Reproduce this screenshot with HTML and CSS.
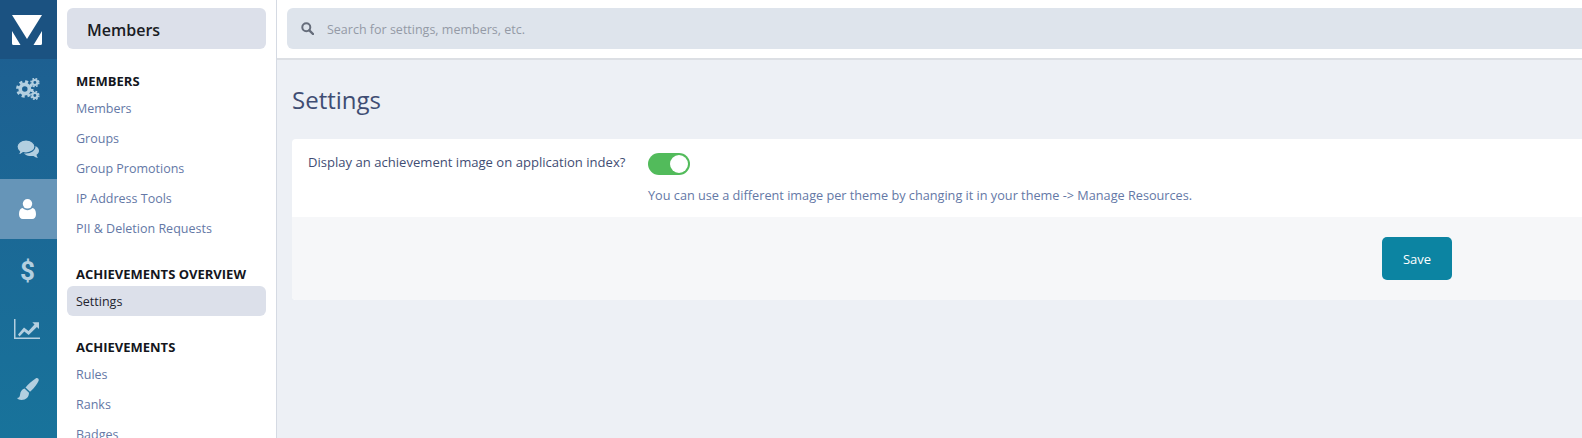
FILE: index.html
```html
<!DOCTYPE html>
<html lang="en">
<head>
<meta charset="utf-8">
<title>Settings</title>
<link rel="stylesheet" href="styles.css">
</head>
<body>
<div class="app">
  <nav class="rail">
    <div class="rail-logo">
      <svg class="logo" viewBox="0 0 30 30" width="30" height="30"><path d="M0 0H30L15 24Z" fill="#fff"/><path d="M0 16L8.500 30H1.500Q0 30 0 28.500ZM30 16L21.500 30H28.500Q30 30 30 28.500Z" fill="#fff"/></svg>
    </div>
    <a class="rail-item">
      <svg viewBox="0 0 26 24" width="24" height="22" class="ico"><circle cx="9.500" cy="12" r="5" fill="none" stroke="currentColor" stroke-width="4"/><circle cx="9.500" cy="12" r="8" fill="none" stroke="currentColor" stroke-width="3" stroke-dasharray="3.300 3"/><circle cx="20.500" cy="5" r="2.700" fill="none" stroke="currentColor" stroke-width="2.200"/><circle cx="20.500" cy="5" r="4.300" fill="none" stroke="currentColor" stroke-width="1.700" stroke-dasharray="1.900 1.500"/><circle cx="20.500" cy="19" r="2.700" fill="none" stroke="currentColor" stroke-width="2.200"/><circle cx="20.500" cy="19" r="4.300" fill="none" stroke="currentColor" stroke-width="1.700" stroke-dasharray="1.900 1.500"/></svg>
    </a>
    <a class="rail-item">
      <svg viewBox="0 0 22 18" width="22" height="18" class="ico"><path d="M14 5C18.500 5 22 7.500 22 10.700c0 1.700-1 3.100-2.500 4.100.2.900.7 1.800 1.300 3.200-1.700-.4-3.200-1.100-4.300-2.100-.8.200-1.600.2-2.500.2-4.400 0-8-2.500-8-5.400S9.600 5 14 5z" fill="currentColor"/><path class="chat-front" d="M9 0c5 0 9 2.900 9 6.500S14 13 9 13c-1 0-2-.1-2.900-.4C4.800 13.800 3.100 14.700 1 15c.8-1.100 1.300-2 1.600-3.300C1 10.500 0 8.600 0 6.500 0 2.900 4 0 9 0z" fill="currentColor"/></svg>
    </a>
    <a class="rail-item rail-item-on">
      <svg viewBox="0 0 18 21" width="17" height="20" class="ico ico-white"><circle cx="9" cy="5" r="5" fill="currentColor"/><path d="M4 9.500C5.300 11 7 11.700 9 11.700s3.700-.7 5-2.200c2.600.3 4 2.600 4 6.500 0 3-1.700 5-4 5H4c-2.300 0-4-2-4-5 0-3.900 1.400-6.200 4-6.500z" fill="currentColor"/></svg>
    </a>
    <a class="rail-item"><span class="dollar">$</span></a>
    <a class="rail-item">
      <svg viewBox="0 0 26 20" width="26" height="20" class="ico ico-left"><path d="M0 0H1.500V18.500H26V20H0Z" fill="currentColor"/><path d="M4 15.500L10 8.500L14.500 12L20.500 5.500L18.300 3.300H25V10L22.900 7.900L14.700 16L10.300 12.500L5.500 17.500Z" fill="currentColor"/></svg>
    </a>
    <a class="rail-item">
      <svg viewBox="0 0 22 22" width="22" height="22" class="ico"><path d="M19 .3C20.500-.5 22.300 1 21.600 2.800 20 6.500 16 11.500 13 13.800L8.500 9.500C11 6.500 15.500 2.500 19 .3Z" fill="currentColor"/><path d="M7.500 10.500L12 14.800C12 19 9 22 4.500 22 2.500 22 .8 21.200 0 20 1.800 20 2.800 19 3 17 3.300 13.500 5 11 7.500 10.500Z" fill="currentColor"/></svg>
    </a>
  </nav>

  <aside class="side">
    <div class="side-title"><span class="side-title-text">Members</span></div>
    <div class="side-group side-group-first">
      <h3 class="side-head">MEMBERS</h3>
      <a class="side-link">Members</a>
      <a class="side-link">Groups</a>
      <a class="side-link">Group Promotions</a>
      <a class="side-link">IP Address Tools</a>
      <a class="side-link">PII &amp; Deletion Requests</a>
    </div>
    <div class="side-group">
      <h3 class="side-head">ACHIEVEMENTS OVERVIEW</h3>
      <a class="side-link side-link-on">Settings</a>
    </div>
    <div class="side-group">
      <h3 class="side-head">ACHIEVEMENTS</h3>
      <a class="side-link">Rules</a>
      <a class="side-link">Ranks</a>
      <a class="side-link">Badges</a>
    </div>
  </aside>

  <main class="main">
    <header class="top">
      <div class="search">
        <svg viewBox="0 0 13 13" width="13" height="13" class="search-ico"><circle cx="5.300" cy="5.300" r="4" fill="none" stroke="currentColor" stroke-width="2"/><path d="M8.300 8.300L12 12" stroke="currentColor" stroke-width="2.400" stroke-linecap="round"/></svg>
        <span class="search-text">Search for settings, members, etc.</span>
      </div>
    </header>
    <div class="content">
      <h1 class="page-title">Settings</h1>
      <section class="card">
        <div class="row">
          <div class="row-label">Display an achievement image on application index?</div>
          <div class="row-field">
            <span class="toggle"><span class="knob"></span></span>
            <p class="hint">You can use a different image per theme by changing it in your theme -&gt; Manage Resources.</p>
          </div>
        </div>
        <div class="actions"><button class="save" type="button">Save</button></div>
      </section>
    </div>
  </main>
</div>
</body>
</html>
```
FILE: styles.css
```css
* { box-sizing: border-box; }
html, body { margin: 0; height: 100%; overflow: hidden; }
body { font-family: "Open Sans", "Noto Sans", sans-serif; font-size: 13px; background: #edf0f5; }
.app { display: flex; height: 438px; overflow: hidden; }

.rail { width: 57px; flex: none; background: linear-gradient(180deg, #1e5d90 0%, #18739b 100%); display: flex; flex-direction: column; }
.rail-logo { height: 59px; background: #1b5281; display: flex; align-items: center; padding-left: 12px; }
.rail-item { height: 60px; flex: none; display: flex; align-items: center; justify-content: center; padding-right: 2px; color: #b3cfe0; }
.rail-item-on { background: #6695b8; }
.ico-white { color: #fff; }
.ico-left { margin-left: -1px; }
.chat-front { stroke: #1e6594; stroke-width: 1.200px; }
.dollar { font-family: "Roboto", sans-serif; font-weight: 700; font-size: 26px; line-height: 1; padding-top: 4px; color: #b3cfe0; }

.side { width: 220px; flex: none; background: #fff; border-right: 1px solid #d5dae3; padding: 8px 10px 0 10px; overflow: hidden; }
.side-title { height: 41px; background: #dce0ea; border-radius: 6px; padding-left: 20px; display: flex; align-items: center; font-size: 16px; font-weight: 600; color: #1a1c24; }
.side-title-text { padding-top: 2px; }
.side-group { margin-top: 19px; }
.side-group-first { margin-top: 20px; }
.side-head { margin: 0; padding-left: 9px; font-size: 13px; line-height: 24px; font-weight: 700; color: #14161d; }
.side-link { display: flex; align-items: center; height: 30px; padding-left: 9px; font-size: 12.500px; color: #6478a6; border-radius: 6px; }
.side-link-on { background: #dce0ea; color: #1f2430; }

.main { flex: 1; min-width: 0; display: flex; flex-direction: column; }
.top { height: 60px; flex: none; background: #fff; border-bottom: 2px solid #dcdfe4; padding: 8px 0 0 10px; }
.search { height: 41px; background: #dee4ec; border-radius: 6px 0 0 6px; display: flex; align-items: center; padding-left: 14px; }
.search-ico { color: #666d7b; }
.search-text { margin-left: 13px; padding-top: 2px; font-size: 12.500px; color: #949aa6; }

.content { padding: 0 0 0 15px; }
.page-title { margin: 22px 0 0; font-size: 24px; line-height: 36px; font-weight: 400; color: #3f4d73; }
.card { margin-top: 21px; background: #fff; border-radius: 4px 0 0 4px; overflow: hidden; }
.row { display: flex; height: 78px; padding: 14px 0 0 16px; }
.row-label { width: 340px; flex: none; font-size: 13.080px; color: #3f4d73; line-height: 18px; }
.row-field { display: flex; flex-direction: column; }
.toggle { display: flex; justify-content: flex-end; align-items: center; width: 42px; height: 22px; background: #52bb5b; border-radius: 11px; padding-right: 2px; }
.knob { width: 18px; height: 18px; background: #fff; border-radius: 50%; }
.hint { margin: 11px 0 0; font-size: 12.700px; color: #6478a6; line-height: 18px; }
.actions { height: 83px; background: #f6f7f9; display: flex; align-items: center; justify-content: flex-end; padding-right: 130px; }
.save { width: 70px; height: 43px; background: #0c84a2; border: 0; border-radius: 5px; color: #fff; font: inherit; }
```
